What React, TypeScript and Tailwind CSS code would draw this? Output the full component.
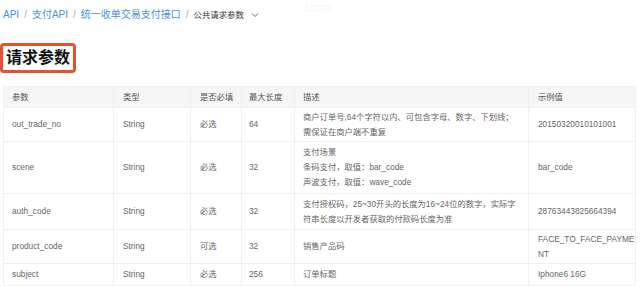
import React from "react";

const cols = [110, 77, 51, 53, 234, 107];
const pads = ["pl-[8px]", "pl-[9px]", "pl-[9px]", "pl-[7px]", "pl-[8px]", "pl-[9px]"];

type Row = { h: string; cells: React.ReactNode[] };

const rows: Row[] = [
  {
    h: "h-[34px]",
    cells: [
      "out_trade_no",
      "String",
      "必选",
      "64",
      <>
        商户订单号,64个字符以内、可包含字母、数字、下划线；
        <br />
        需保证在商户端不重复
      </>,
      "20150320010101001",
    ],
  },
  {
    h: "h-[52px]",
    cells: [
      "scene",
      "String",
      "必选",
      "32",
      <>
        支付场景
        <br />
        条码支付，取值：bar_code
        <br />
        声波支付，取值：wave_code
      </>,
      "bar_code",
    ],
  },
  {
    h: "h-[36px]",
    cells: [
      "auth_code",
      "String",
      "必选",
      "32",
      <>
        支付授权码，25~30开头的长度为16~24位的数字，实际字
        <br />
        符串长度以开发者获取的付款码长度为准
      </>,
      "28763443825664394",
    ],
  },
  {
    h: "h-[34px]",
    cells: [
      "product_code",
      "String",
      "可选",
      "32",
      "销售产品码",
      <>
        FACE_TO_FACE_PAYME
        <br />
        NT
      </>,
    ],
  },
  {
    h: "h-[22px]",
    cells: ["subject", "String", "必选", "256", "订单标题", "Iphone6 16G"],
  },
];

const headers = ["参数", "类型", "是否必填", "最大长度", "描述", "示例值"];

export default function App() {
  return (
    <div className="relative w-[640px] h-[286px] overflow-hidden bg-white font-['Liberation_Sans','Noto_Sans_CJK_SC',sans-serif]">
      <div className="absolute left-[305px] top-[2px] text-[9px] text-[#f4f4f4]">LOGO</div>
      <div className="flex items-center h-[30px] pl-[3px] text-[10px] leading-none">
        <span className="text-[#4a8fe0]">API</span>
        <span className="mx-[5px] text-[#aaa]">/</span>
        <span className="text-[#4a8fe0]">支付API</span>
        <span className="mx-[5px] text-[#aaa]">/</span>
        <span className="text-[#4a8fe0]">统一收单交易支付接口</span>
        <span className="mx-[5px] text-[#aaa]">/</span>
        <span className="text-[8.4px] text-[#333]">公共请求参数</span>
        <svg className="ml-[7px]" width="8" height="6" viewBox="0 0 8 6">
          <path d="M1 1.5 L4 4.5 L7 1.5" fill="none" stroke="#666" strokeWidth="1" />
        </svg>
      </div>
      <div className="mt-[13px] inline-flex border-[3px] border-[#e4532c] rounded-[4px] px-[3px] bg-white">
        <span className="text-[16px] leading-[24px] font-bold text-[#111]">请求参数</span>
      </div>
      <div className="mt-[13px] ml-[3px]">
        <table className="table-fixed border-collapse w-[632px] text-[8.3px] leading-[15px]">
          <colgroup>
            {cols.map((w, i) => (
              <col key={i} style={{ width: w }} />
            ))}
          </colgroup>
          <thead>
            <tr className="h-[21px] bg-[#f6f6f6]">
              {headers.map((t, i) => (
                <th
                  key={i}
                  className={`${pads[i]} text-left font-normal text-[#555] border border-[#f0f0f0] align-middle`}
                >
                  {t}
                </th>
              ))}
            </tr>
          </thead>
          <tbody>
            {rows.map((r, ri) => (
              <tr key={ri} className={r.h}>
                {r.cells.map((c, ci) => (
                  <td
                    key={ci}
                    className={`${pads[ci]} whitespace-nowrap text-[#666] border border-[#f0f0f0] align-middle`}
                  >
                    {c}
                  </td>
                ))}
              </tr>
            ))}
          </tbody>
        </table>
      </div>
    </div>
  );
}
